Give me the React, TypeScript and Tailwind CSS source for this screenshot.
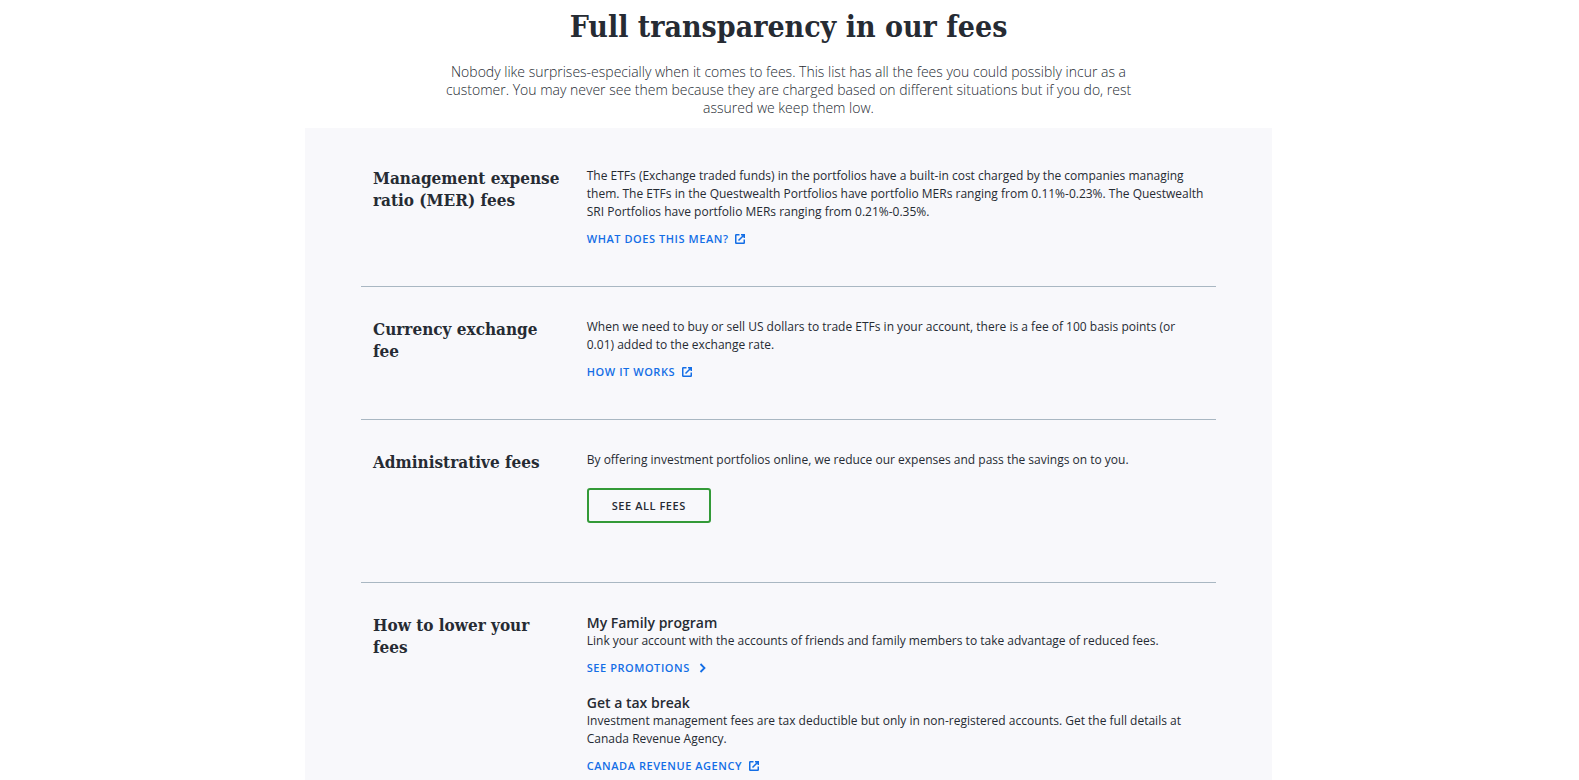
import type { ReactNode } from 'react';

const slab = "font-['Roboto_Slab','DejaVu_Serif_Condensed','DejaVu_Serif',serif]";

function ExternalIcon() {
  return (
    <svg viewBox="0 0 14 14" className="size-[14px]" fill="none" stroke="currentColor" strokeWidth="1.5" aria-hidden="true">
      <path d="M6.5 2.75H3.25a.5.5 0 0 0-.5.5v7.5a.5.5 0 0 0 .5.5h7.5a.5.5 0 0 0 .5-.5V7.5" />
      <path d="M8 2.75h3.25V6M11.25 2.75L5.5 8.5" />
    </svg>
  );
}

function ChevronIcon() {
  return (
    <svg viewBox="0 0 14 14" className="ml-1 size-[14px]" fill="none" stroke="currentColor" strokeWidth="1.8" aria-hidden="true">
      <path d="M1.5 3l4 4-4 4" />
    </svg>
  );
}

function TextLink({ href, external, children }: { href: string; external?: boolean; children: ReactNode }) {
  return (
    <a
      href={href}
      className="mt-[9px] flex w-fit items-center gap-[5px] text-[11px] leading-[18px] font-semibold tracking-wider text-[#146ee6] uppercase"
    >
      {children}
      {external ? <ExternalIcon /> : <ChevronIcon />}
    </a>
  );
}

function FeeRow({ title, children }: { title: string; children: ReactNode }) {
  return (
    <section className="grid grid-cols-12 border-b border-[#a9b7c2] pt-[31px] pb-[38px] last:border-b-0">
      <h3 className={`${slab} col-span-3 pr-2 pl-3 text-[17px] leading-[22px] font-bold`}>{title}</h3>
      <div className="col-span-9 px-3 text-[12px] leading-[18px]">{children}</div>
    </section>
  );
}

export default function App() {
  return (
    <main className="bg-white pr-0.5 font-['Open_Sans',sans-serif] text-[#262b33]">
      <header className="mx-auto max-w-[724px] px-3 pt-1 text-center">
        <h1 className={`${slab} text-[30px] leading-[46px] font-bold`}>Full transparency in our fees</h1>
        <p className="mt-[13px] text-[14px] leading-[18px] font-light">
          Nobody like surprises-especially when it comes to fees. This list has all the fees you could possibly
          incur as a customer. You may never see them because they are charged based on different situations but
          if you do, rest assured we keep them low.
        </p>
      </header>

      <div className="mx-auto mt-[11px] max-w-[967px] bg-[#f8f8fb] px-14 pt-2">
        <FeeRow title="Management expense ratio (MER) fees">
          <p>
            The ETFs (Exchange traded funds) in the portfolios have a built-in cost charged by the companies
            managing them. The ETFs in the Questwealth Portfolios have portfolio MERs ranging from 0.11%-0.23%.
            The Questwealth SRI Portfolios have portfolio MERs ranging from 0.21%-0.35%.
          </p>
          <TextLink href="#mer" external>What does this mean?</TextLink>
        </FeeRow>

        <FeeRow title="Currency exchange fee">
          <p>
            When we need to buy or sell US dollars to trade ETFs in your account, there is a fee of 100 basis
            points (or 0.01) added to the exchange rate.
          </p>
          <TextLink href="#exchange" external>How it works</TextLink>
        </FeeRow>

        <FeeRow title="Administrative fees">
          <p>By offering investment portfolios online, we reduce our expenses and pass the savings on to you.</p>
          <button
            type="button"
            className="mt-[19px] mb-[21px] h-[35px] rounded-[3px] border-2 border-[#339a38] px-[23px] text-[11px] font-semibold tracking-wider uppercase"
          >
            See all fees
          </button>
        </FeeRow>

        <FeeRow title="How to lower your fees">
          <h4 className="text-[14px] leading-[18px] font-semibold">My Family program</h4>
          <p>Link your account with the accounts of friends and family members to take advantage of reduced fees.</p>
          <TextLink href="#promotions">See promotions</TextLink>
          <h4 className="mt-[17px] text-[14px] leading-[18px] font-semibold">Get a tax break</h4>
          <p>
            Investment management fees are tax deductible but only in non-registered accounts. Get the full
            details at Canada Revenue Agency.
          </p>
          <TextLink href="#cra" external>Canada Revenue Agency</TextLink>
        </FeeRow>
      </div>
    </main>
  );
}
